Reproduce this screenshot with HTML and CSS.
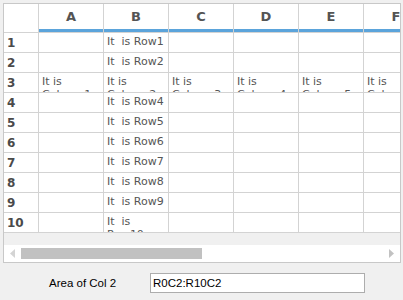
FILE: index.html
```html
<!DOCTYPE html>
<html>
<head>
<meta charset="utf-8">
<link rel="stylesheet" href="styles.css">
</head>
<body>
<div class="grid">
  <div class="sheet">
    <div class="corner"></div>
    <div class="colhead">A</div>
    <div class="colhead">B</div>
    <div class="colhead">C</div>
    <div class="colhead">D</div>
    <div class="colhead">E</div>
    <div class="colhead">F</div>

    <div class="rowhead">1</div>
    <div class="cell"></div><div class="cell">It  is Row1</div><div class="cell"></div><div class="cell"></div><div class="cell"></div><div class="cell"></div>

    <div class="rowhead">2</div>
    <div class="cell"></div><div class="cell">It  is Row2</div><div class="cell"></div><div class="cell"></div><div class="cell"></div><div class="cell"></div>

    <div class="rowhead">3</div>
    <div class="cell">It is Column1</div><div class="cell">It is Column2</div><div class="cell">It is Column3</div><div class="cell">It is Column4</div><div class="cell">It is Column5</div><div class="cell">It is Column6</div>

    <div class="rowhead">4</div>
    <div class="cell"></div><div class="cell">It  is Row4</div><div class="cell"></div><div class="cell"></div><div class="cell"></div><div class="cell"></div>

    <div class="rowhead">5</div>
    <div class="cell"></div><div class="cell">It  is Row5</div><div class="cell"></div><div class="cell"></div><div class="cell"></div><div class="cell"></div>

    <div class="rowhead">6</div>
    <div class="cell"></div><div class="cell">It  is Row6</div><div class="cell"></div><div class="cell"></div><div class="cell"></div><div class="cell"></div>

    <div class="rowhead">7</div>
    <div class="cell"></div><div class="cell">It  is Row7</div><div class="cell"></div><div class="cell"></div><div class="cell"></div><div class="cell"></div>

    <div class="rowhead">8</div>
    <div class="cell"></div><div class="cell">It  is Row8</div><div class="cell"></div><div class="cell"></div><div class="cell"></div><div class="cell"></div>

    <div class="rowhead">9</div>
    <div class="cell"></div><div class="cell">It  is Row9</div><div class="cell"></div><div class="cell"></div><div class="cell"></div><div class="cell"></div>

    <div class="rowhead">10</div>
    <div class="cell"></div><div class="cell">It  is Row10</div><div class="cell"></div><div class="cell"></div><div class="cell"></div><div class="cell"></div>
  </div>
  <div class="spacer"></div>
  <div class="hscroll">
    <div class="arrow arrow-left"><svg width="5" height="9" viewBox="0 0 5 9"><path d="M5 0 L0 4.5 L5 9 Z" fill="#d4d4d4"/></svg></div>
    <div class="track"><div class="thumb"></div></div>
    <div class="arrow arrow-right"><svg width="5" height="9" viewBox="0 0 5 9"><path d="M0 0 L5 4.5 L0 9 Z" fill="#c2c2c2"/></svg></div>
  </div>
</div>
<div class="form">
  <label class="label">Area of Col 2</label>
  <input class="field" type="text" value="R0C2:R10C2">
</div>
</body>
</html>
```
FILE: styles.css
```css
html, body {
  margin: 0;
  padding: 0;
}
body {
  width: 403px;
  height: 300px;
  background: #f0f0f0;
  overflow: hidden;
  font-family: "DejaVu Sans", sans-serif;
}
.grid {
  margin: 3px 0 0 3px;
  width: 398px;
  height: 260px;
  box-sizing: border-box;
  border: 1px solid #c8c8c8;
  background: #f0f0f0;
  display: flex;
  flex-direction: column;
  overflow: hidden;
}
.sheet {
  display: grid;
  grid-template-columns: 34px repeat(6, 64px);
  grid-template-rows: 28px repeat(10, 19px);
  gap: 1px;
  padding-bottom: 1px;
  background: #d3d3d3;
  width: max-content;
  flex: none;
}
.corner {
  background: #fff;
}
.colhead {
  background: #fff;
  border-bottom: 3px solid #5ba4db;
  display: flex;
  align-items: center;
  justify-content: center;
  font-weight: bold;
  font-size: 13px;
  color: #545454;
}
.rowhead {
  background: #fff;
  display: flex;
  align-items: center;
  padding-left: 3px;
  font-weight: bold;
  font-size: 12px;
  color: #4a4a4a;
}
.cell {
  background: #fff;
  padding: 2px 2px 0 3px;
  font-size: 11px;
  line-height: 13px;
  color: #555;
  white-space: pre-wrap;
  overflow: hidden;
}
.spacer {
  height: 12px;
  flex: none;
}
.hscroll {
  height: 17px;
  flex: none;
  background: #fff;
  display: flex;
  align-items: center;
}
.arrow {
  width: 17px;
  height: 17px;
  display: flex;
  align-items: center;
  justify-content: center;
  flex: none;
}
.track {
  flex: 1;
  height: 17px;
  display: flex;
  align-items: center;
}
.thumb {
  width: 181px;
  height: 11px;
  margin-left: 0;
  background: #c1c1c1;
}
.form {
  display: flex;
  align-items: center;
  padding: 10px 0 0 49px;
}
.label {
  width: 101px;
  font-family: "Liberation Sans", sans-serif;
  font-size: 11.5px;
  color: #000;
}
.field {
  width: 215px;
  height: 20px;
  box-sizing: border-box;
  margin: 0;
  border: 1px solid #adadad;
  background: #fff;
  padding: 0 2px;
  font-family: "Liberation Sans", sans-serif;
  font-size: 11.5px;
  color: #000;
  outline: none;
}
```
